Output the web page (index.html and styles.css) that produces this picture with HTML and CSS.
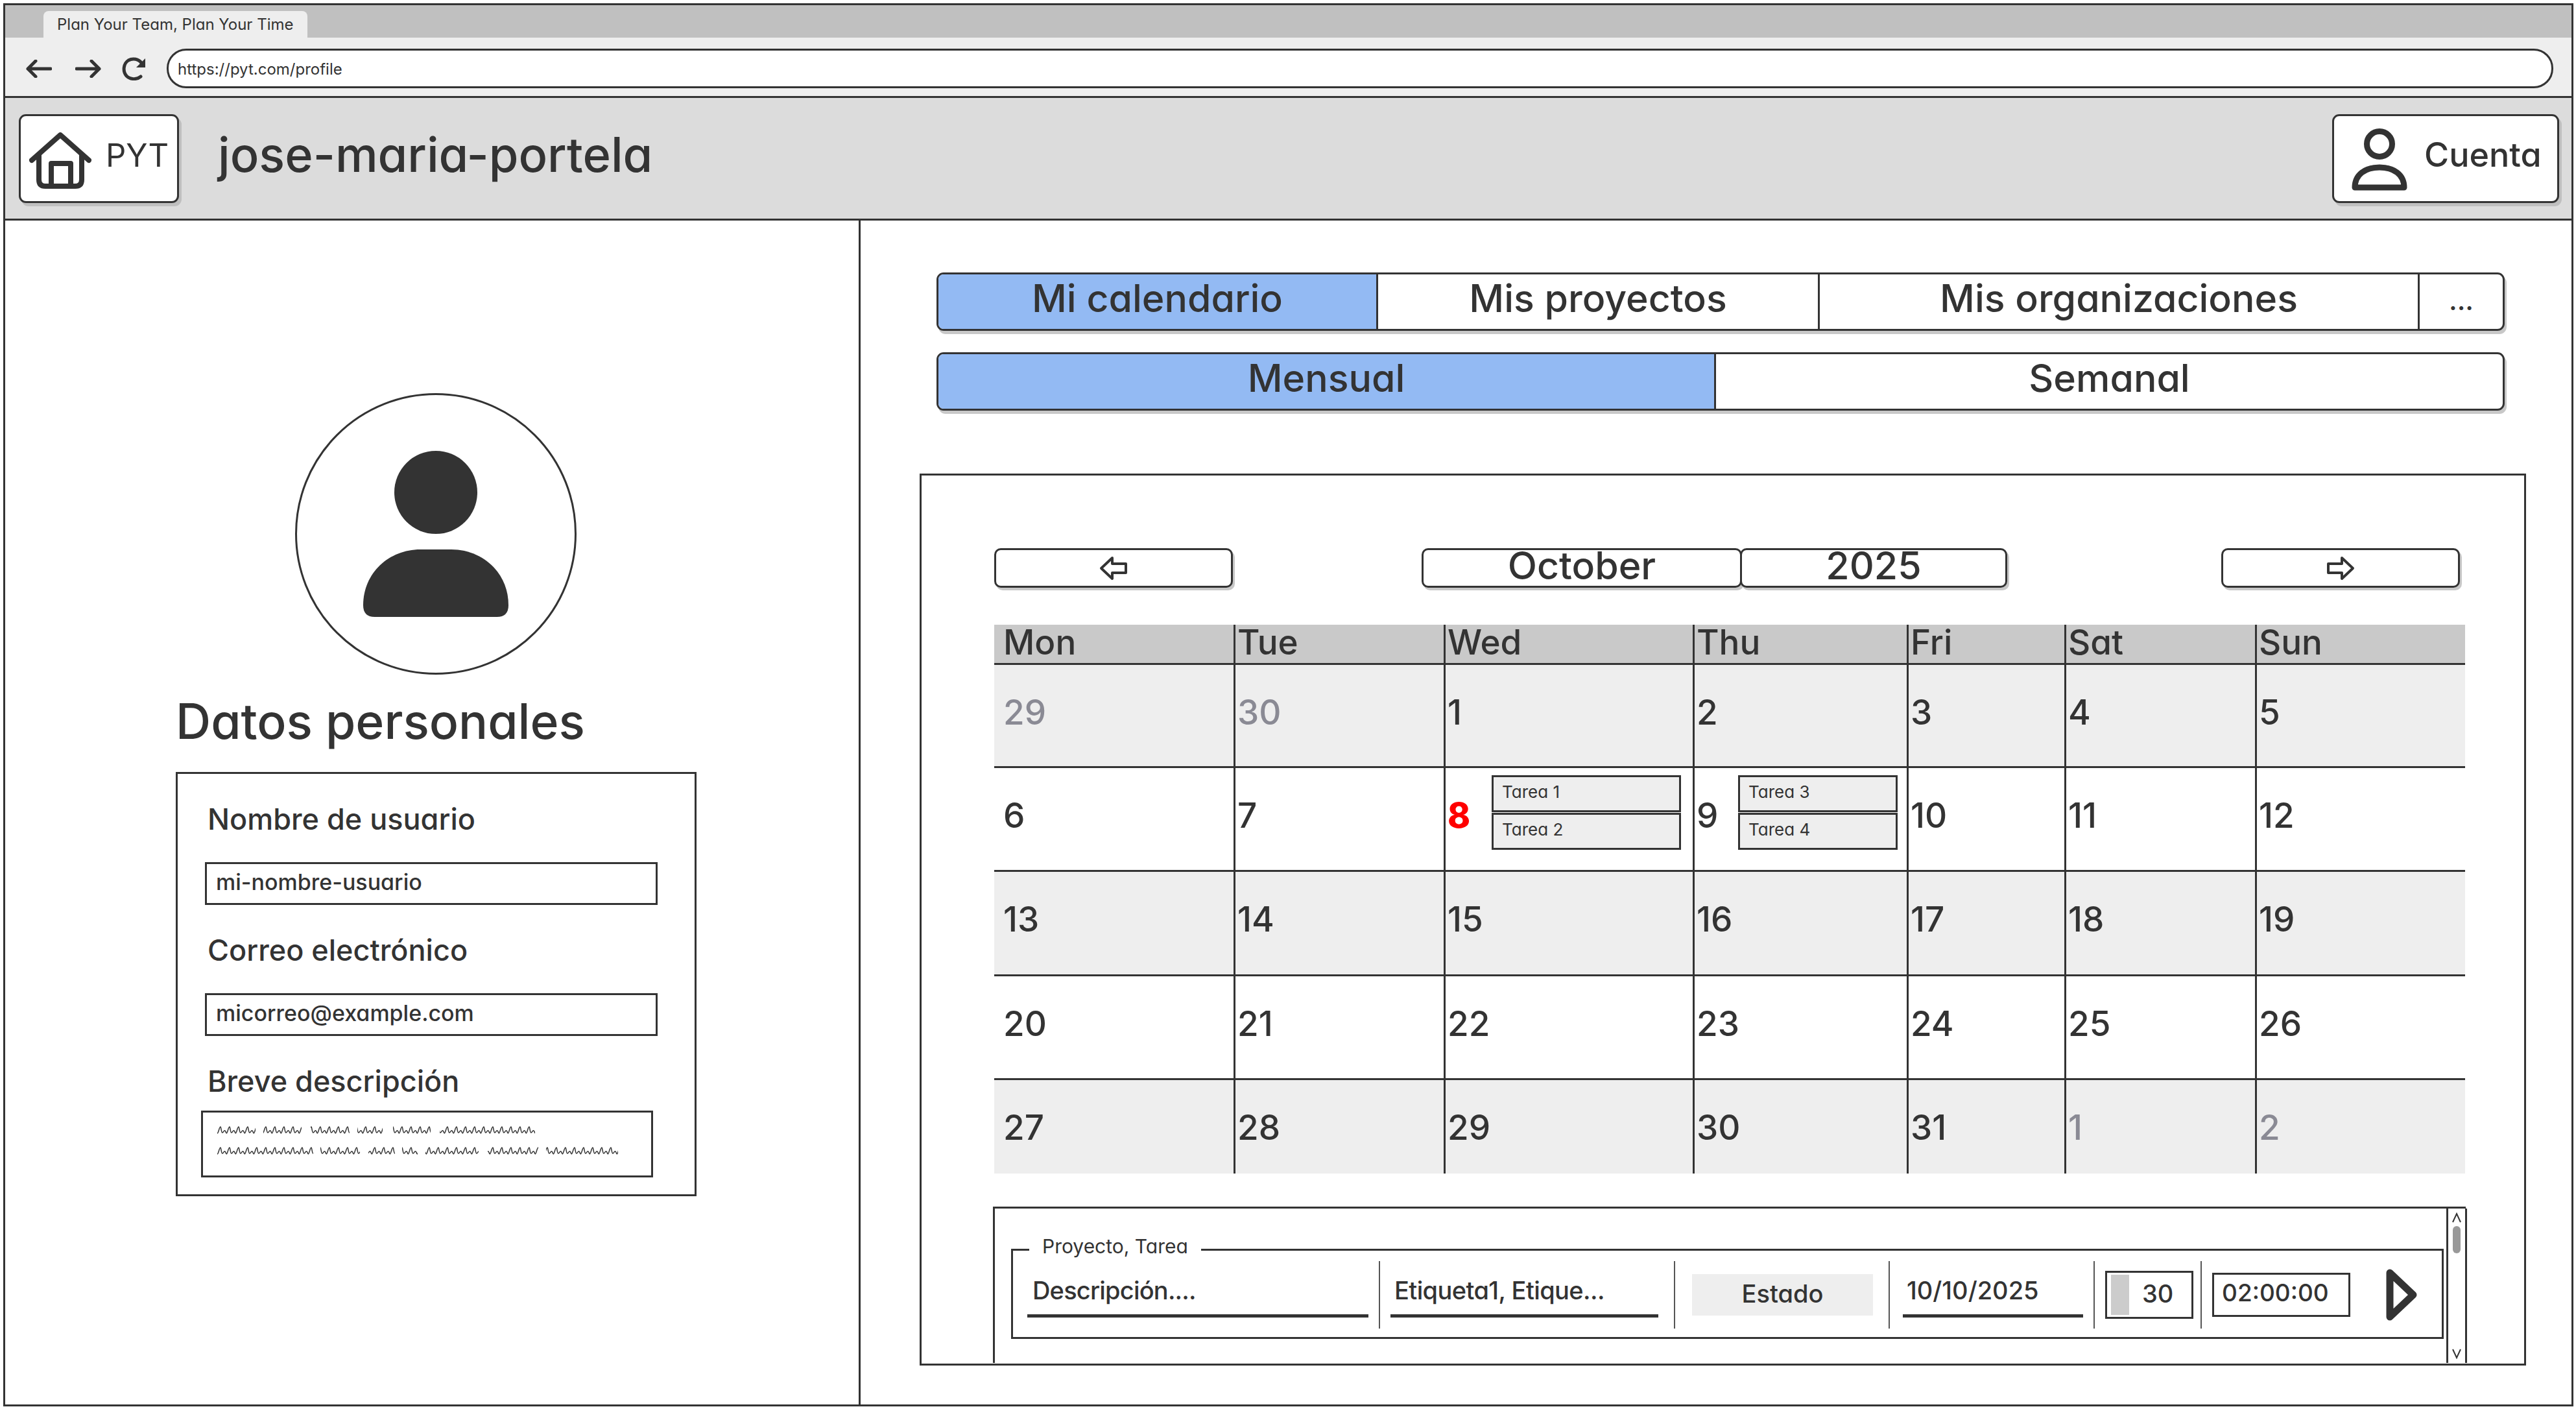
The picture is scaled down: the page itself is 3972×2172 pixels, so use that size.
FILE: index.html
```html
<!DOCTYPE html>
<html lang="es">
<head>
<meta charset="utf-8">
<title>Plan Your Team, Plan Your Time</title>
<link rel="stylesheet" href="styles.css">
</head>
<body>
<div class="frame">
  <div class="tabbar"><div class="tab">Plan Your Team, Plan Your Time</div></div>
  <div class="toolbar">
    <svg class="nav-ico back" viewBox="0 0 40 28"><path d="M38 14H3M15 2 3 14l12 12"/></svg>
    <svg class="nav-ico fwd" viewBox="0 0 40 28"><path d="M2 14h35M25 2l12 12-12 12"/></svg>
    <svg class="nav-ico reload" viewBox="0 0 38 36"><path d="M30 9C26 3 17 1 10 5 2 10 1 22 7 29c6 6 16 6 22 1"/><path class="solid" d="M36 2v14H22z"/></svg>
    <div class="url">https://pyt.com/profile</div>
  </div>
  <header class="header">
    <div class="btn logo">
      <svg class="house" viewBox="0 0 96 88"><path d="M4 43 48 4l44 39"/><path d="M15 36v37q0 10 10 10h46q10 0 10-10V36"/><path d="M34 83V48h30v35"/></svg>
      <span>PYT</span>
    </div>
    <h1 class="title">jose-maria-portela</h1>
    <div class="btn account">
      <svg class="person" viewBox="0 0 86 96"><circle cx="43" cy="24" r="19.5"/><path d="M5 91c0-20 16-31 38-31s38 11 38 31z"/></svg>
      <span>Cuenta</span>
    </div>
  </header>
  <div class="main">
    <aside class="side">
      <div class="avatar">
        <svg class="avatar-ico" viewBox="0 0 224 256"><circle cx="112" cy="64" r="64"/><path d="M0 238c0-50 40-86 88-86h48c48 0 88 36 88 86q0 18-18 18H18q-18 0-18-18z"/></svg>
      </div>
      <h2 class="heading">Datos personales</h2>
      <div class="form">
        <div class="label">Nombre de usuario</div>
        <div class="input">mi-nombre-usuario</div>
        <div class="label">Correo electrónico</div>
        <div class="input">micorreo@example.com</div>
        <div class="label">Breve descripción</div>
        <div class="textarea">
          <svg class="scribble" viewBox="0 0 620 48">
            <defs><pattern id="zig" width="14" height="16" patternUnits="userSpaceOnUse"><path d="M0 13C2 13 3 3 5 3 6 3 6 12 8 12 10 12 11 4 14 13" fill="none" stroke="#333" stroke-width="1.5"/></pattern></defs>
            <g fill="url(#zig)">
              <rect x="0" y="0" width="59" height="16"/><rect x="71" y="0" width="59" height="16"/><rect x="144" y="0" width="60" height="16"/><rect x="216" y="0" width="39" height="16"/><rect x="271" y="0" width="58" height="16"/><rect x="343" y="0" width="147" height="16"/>
              <rect x="0" y="30" width="148" height="16"/><rect x="159" y="30" width="61" height="16"/><rect x="233" y="30" width="41" height="16"/><rect x="285" y="30" width="24" height="16"/><rect x="321" y="30" width="82" height="16"/><rect x="417" y="30" width="78" height="16"/><rect x="507" y="30" width="111" height="16"/>
            </g>
          </svg>
        </div>
      </div>
    </aside>
    <main class="content">
      <div class="seg seg-top">
        <div class="seg-item active s1">Mi calendario</div>
        <div class="seg-item s2">Mis proyectos</div>
        <div class="seg-item s3">Mis organizaciones</div>
        <div class="seg-item s4">...</div>
      </div>
      <div class="seg seg-view">
        <div class="seg-item active v1">Mensual</div>
        <div class="seg-item v2">Semanal</div>
      </div>
      <section class="panel">
        <div class="cal-nav">
          <div class="nbtn arrow-btn"><svg class="arrow" viewBox="0 0 44 38"><path d="M20 3 3 19l17 16v-9h21V12H20z"/></svg></div>
          <div class="picker">
            <div class="nbtn month">October</div>
            <div class="nbtn year">2025</div>
          </div>
          <div class="nbtn arrow-btn next"><svg class="arrow" viewBox="0 0 44 38"><path d="M24 3l17 16-17 16v-9H3V12h21z"/></svg></div>
        </div>
        <div class="cal">
          <div class="row row-head"><div class="c">Mon</div><div class="c">Tue</div><div class="c">Wed</div><div class="c">Thu</div><div class="c">Fri</div><div class="c">Sat</div><div class="c">Sun</div></div>
          <div class="row shade r159"><div class="c muted">29</div><div class="c muted">30</div><div class="c">1</div><div class="c">2</div><div class="c">3</div><div class="c">4</div><div class="c">5</div></div>
          <div class="row r160">
            <div class="c">6</div><div class="c">7</div>
            <div class="c has-tasks w"><span class="today">8</span><div class="tasks"><div class="task">Tarea 1</div><div class="task">Tarea 2</div></div></div>
            <div class="c has-tasks t"><span>9</span><div class="tasks"><div class="task">Tarea 3</div><div class="task">Tarea 4</div></div></div>
            <div class="c">10</div><div class="c">11</div><div class="c">12</div>
          </div>
          <div class="row shade r161"><div class="c">13</div><div class="c">14</div><div class="c">15</div><div class="c">16</div><div class="c">17</div><div class="c">18</div><div class="c">19</div></div>
          <div class="row r160"><div class="c">20</div><div class="c">21</div><div class="c">22</div><div class="c">23</div><div class="c">24</div><div class="c">25</div><div class="c">26</div></div>
          <div class="row shade r147"><div class="c">27</div><div class="c">28</div><div class="c">29</div><div class="c">30</div><div class="c">31</div><div class="c muted">1</div><div class="c muted">2</div></div>
        </div>
        <div class="timer">
          <div class="fieldset">
            <div class="legend">Proyecto, Tarea</div>
            <div class="f-input f-desc">Descripción....</div>
            <div class="divider d1"></div>
            <div class="f-input f-tags">Etiqueta1, Etique...</div>
            <div class="divider d2"></div>
            <div class="estado">Estado</div>
            <div class="divider d3"></div>
            <div class="f-input f-date">10/10/2025</div>
            <div class="divider d4"></div>
            <div class="num"><span class="num-bar"></span><span>30</span></div>
            <div class="divider d5"></div>
            <div class="time">02:00:00</div>
            <svg class="play" viewBox="0 0 48 80"><path d="M6 6v68L42 40z"/></svg>
          </div>
          <div class="scrollbar">
            <svg class="chev" viewBox="0 0 16 16"><path d="M2 15 8 2l6 13"/></svg>
            <div class="thumb"></div>
            <svg class="chev down" viewBox="0 0 16 16"><path d="M2 1l6 13 6-13"/></svg>
          </div>
        </div>
      </section>
    </main>
  </div>
</div>
</body>
</html>
```
FILE: styles.css
```css
* { box-sizing: border-box; }
html, body { margin: 0; padding: 0; background: #fff; }
body {
  width: 3972px; height: 2172px; overflow: hidden;
  font-family: Inter, "Noto Sans", sans-serif;
  font-feature-settings: "cv11" 1;
  font-weight: 500;
  color: #333;
}
.frame {
  margin: 5px 0 0 5px; width: 3963px; height: 2163px;
  border: 3px solid #333; display: flex; flex-direction: column;
}
.tabbar { height: 50px; background: #c0c0c0; padding: 9px 0 0 59px; flex: none; }
.tab {
  width: 407px; height: 41px; background: #eee; border-radius: 8px 8px 0 0;
  font-size: 24px; font-weight: 400; line-height: 41px; padding-left: 21px; white-space: nowrap;
}
.toolbar {
  height: 93px; background: #eee; border-bottom: 3px solid #333; flex: none;
  display: flex; align-items: center; padding: 5px 28px 0 32px;
}
.nav-ico { fill: none; stroke: #333; stroke-width: 5; stroke-linecap: round; stroke-linejoin: round; flex: none; }
.nav-ico .solid { fill: #333; stroke: none; }
.back, .fwd { width: 40px; height: 28px; }
.fwd { margin-left: 36px; }
.reload { width: 38px; height: 36px; margin-left: 32px; }
.url {
  margin-left: 31px; flex: 1; height: 61px; background: #fff; border: 3px solid #333;
  border-radius: 30px; font-size: 24px; font-weight: 400; line-height: 57px; padding-left: 14px;
}
.header {
  height: 189px; background: #dcdcdc; border-bottom: 3px solid #333; flex: none;
  display: flex; align-items: center; padding: 0 19px 0 21px;
}
.btn {
  height: 137px; background: #fff; border: 3px solid #333; border-radius: 11px;
  box-shadow: 4px 5px 0 #bfbfbf; display: flex; align-items: center; flex: none;
}
.logo { width: 247px; padding: 0 0 0 13px; font-size: 49px; }
.logo span { margin: -10px 0 0 22px; font-weight: 400; }
.house { width: 96px; height: 88px; fill: none; stroke: #333; stroke-width: 8; stroke-linecap: round; stroke-linejoin: round; flex: none; margin-top: 8px; }
.title { margin: 0 0 0 60px; font-size: 74px; font-weight: 500; line-height: 1; flex: 1; padding-bottom: 12px; }
.account { width: 350px; padding-left: 27px; font-size: 52px; }
.account span { margin: -12px 0 0 26px; }
.person { width: 86px; height: 96px; fill: none; stroke: #333; stroke-width: 9; stroke-linejoin: round; flex: none; margin-top: 3px; }
.main { flex: 1; display: flex; min-height: 0; }
.side { width: 1319px; border-right: 3px solid #333; padding: 266px 0 0 263px; flex: none; }
.avatar {
  width: 434px; height: 434px; border: 3px solid #333; border-radius: 50%;
  margin-left: 184px; display: flex; justify-content: center; padding-top: 86px;
}
.avatar-ico { width: 224px; height: 256px; fill: #333; }
.heading { margin: 22px 0 0 0; font-size: 75px; font-weight: 500; line-height: 100px; }
.form { margin-top: 28px; width: 803px; height: 654px; border: 3px solid #333; padding: 40px 0 0 42px; }
.label { font-size: 45px; line-height: 60px; padding-left: 4px; margin-bottom: 36px; }
.input {
  width: 698px; height: 66px; border: 3px solid #333; font-size: 34px; line-height: 56px;
  padding-left: 14px; margin-bottom: 40px;
}
.input + .label + .textarea { margin-top: -21px; }
.textarea { width: 697px; height: 103px; border: 3px solid #333; margin-left: -6px; padding: 19px 0 0 22px; }
.scribble { display: block; width: 620px; height: 48px; }
.content { flex: 1; padding: 80px 0 0 0; min-width: 0; }
.seg {
  margin-left: 117px; width: 2418px; height: 90px; border: 3px solid #333; border-radius: 11px;
  box-shadow: 3px 5px 0 #c8c8c8; display: flex; overflow: hidden; background: #fff;
}
.seg-view { margin-top: 33px; }
.seg-item { font-size: 59px; line-height: 73px; text-align: center; flex: none; border-left: 3px solid #333; }
.seg-item:first-child { border-left: 0; }
.active { background: #93baf3; }
.s1 { width: 675px; } .s2 { width: 681px; } .s3 { width: 925px; }
.s4 { flex: 1; font-size: 42px; line-height: 80px; }
.v1 { width: 1196px; } .v2 { flex: 1; }
.panel {
  margin: 97px 0 0 91px; width: 2477px; height: 1375px; border: 3px solid #333;
  padding: 112px 0 0 112px;
}
.cal-nav { display: flex; width: 2260px; height: 61px; margin-bottom: 57px; }
.nbtn {
  height: 61px; background: #fff; border: 3px solid #333; border-radius: 10px;
  box-shadow: 3px 4px 0 #c8c8c8; display: flex; align-items: center; justify-content: center;
  font-size: 59px; flex: none; line-height: 1; padding-bottom: 9px;
}
.arrow-btn { width: 368px; padding-bottom: 0; }
.next { margin-left: auto; }
.arrow { width: 44px; height: 38px; fill: none; stroke: #333; stroke-width: 4; stroke-linejoin: round; }
.picker { display: flex; margin-left: 291px; }
.month { width: 494px; }
.year { width: 412px; margin-left: -3px; }
.cal { width: 2268px; }
.row { display: grid; grid-template-columns: 369px 324px 384px 330px 243px 294px 324px; border-top: 3px solid #333; }
.row-head { height: 59px; background: #c9c9c9; border-top: 0; border-bottom: 0; }
.shade { background: #eee; }
.r159 { height: 159px; } .r160 { height: 160px; } .r161 { height: 161px; } .r147 { height: 147px; }
.c {
  font-size: 53px; line-height: 54px; padding: 46px 0 0 3px; border-left: 3px solid #333;
  display: flex; align-items: flex-start; min-width: 0;
}
.c:first-child { border-left: 0; padding-left: 14px; }
.row-head .c { padding-top: 0; }
.muted { color: #8a8a94; }
.today { color: #f00; font-weight: 800; }
.has-tasks { justify-content: space-between; padding-top: 0; }
.has-tasks span { margin-top: 46px; }
.has-tasks.w { padding-right: 18px; }
.has-tasks.t { padding-right: 14px; }
.tasks { margin-top: 11px; }
.w .tasks { width: 292px; }
.t .tasks { width: 246px; }
.task {
  height: 57px; border: 3px solid #333; background: #eee; font-size: 26px; font-weight: 400; line-height: 46px;
  padding-left: 13px; margin-bottom: 1px;
}
.timer { margin: 51px 0 0 -2px; width: 2271px; height: 241px; display: flex; border: 3px solid #333; border-width: 3px 0 0 3px; }
.fieldset {
  position: relative; margin: 62px 0 0 25px; width: 2209px; height: 139px;
  border: 3px solid #333; display: flex; align-items: center; padding: 2px 0 0 22px; flex: none;
}
.legend {
  position: absolute; left: 25px; top: -29px; background: #fff; padding: 0 20px;
  font-size: 30px; font-weight: 400; line-height: 44px; white-space: nowrap;
}
.f-input {
  height: 70px; border-bottom: 5px solid #333; font-size: 38px; line-height: 56px;
  padding-left: 6px; white-space: nowrap; flex: none;
}
.f-desc { width: 526px; letter-spacing: -0.8px; padding-left: 8px; }
.f-tags { width: 413px; letter-spacing: -0.6px; }
.f-date { width: 278px; }
.divider { width: 2px; height: 104px; background: #555; flex: none; margin: 0 16px; }
.d2 { margin: 0 26px 0 24px; }
.d3 { margin: 0 20px 0 24px; }
.d5 { margin: 0 16px 0 11px; }
.estado {
  width: 279px; height: 64px; background: #eee; font-size: 38px; line-height: 60px;
  text-align: center; flex: none;
}
.num { width: 136px; height: 74px; border: 3px solid #333; display: flex; padding: 3px 0 3px 6px; font-size: 38px; line-height: 58px; flex: none; }
.num-bar { width: 28px; background: #ccc; margin-right: 20px; }
.time { width: 213px; height: 68px; border: 3px solid #333; font-size: 37px; line-height: 56px; padding-left: 12px; flex: none; }
.play { width: 48px; height: 80px; margin-left: 55px; fill: none; stroke: #333; stroke-width: 11; stroke-linejoin: round; flex: none; }
.scrollbar {
  margin-left: 4px; width: 32px; border-left: 3px solid #333; border-right: 3px solid #333;
  display: flex; flex-direction: column; align-items: center; padding-top: 6px; flex: none;
}
.chev { width: 16px; height: 16px; fill: none; stroke: #333; stroke-width: 2; flex: none; }
.thumb { width: 12px; height: 42px; background: #999; border-radius: 6px; margin-top: 5px; }
.chev.down { margin-top: auto; margin-bottom: 6px; }
```
